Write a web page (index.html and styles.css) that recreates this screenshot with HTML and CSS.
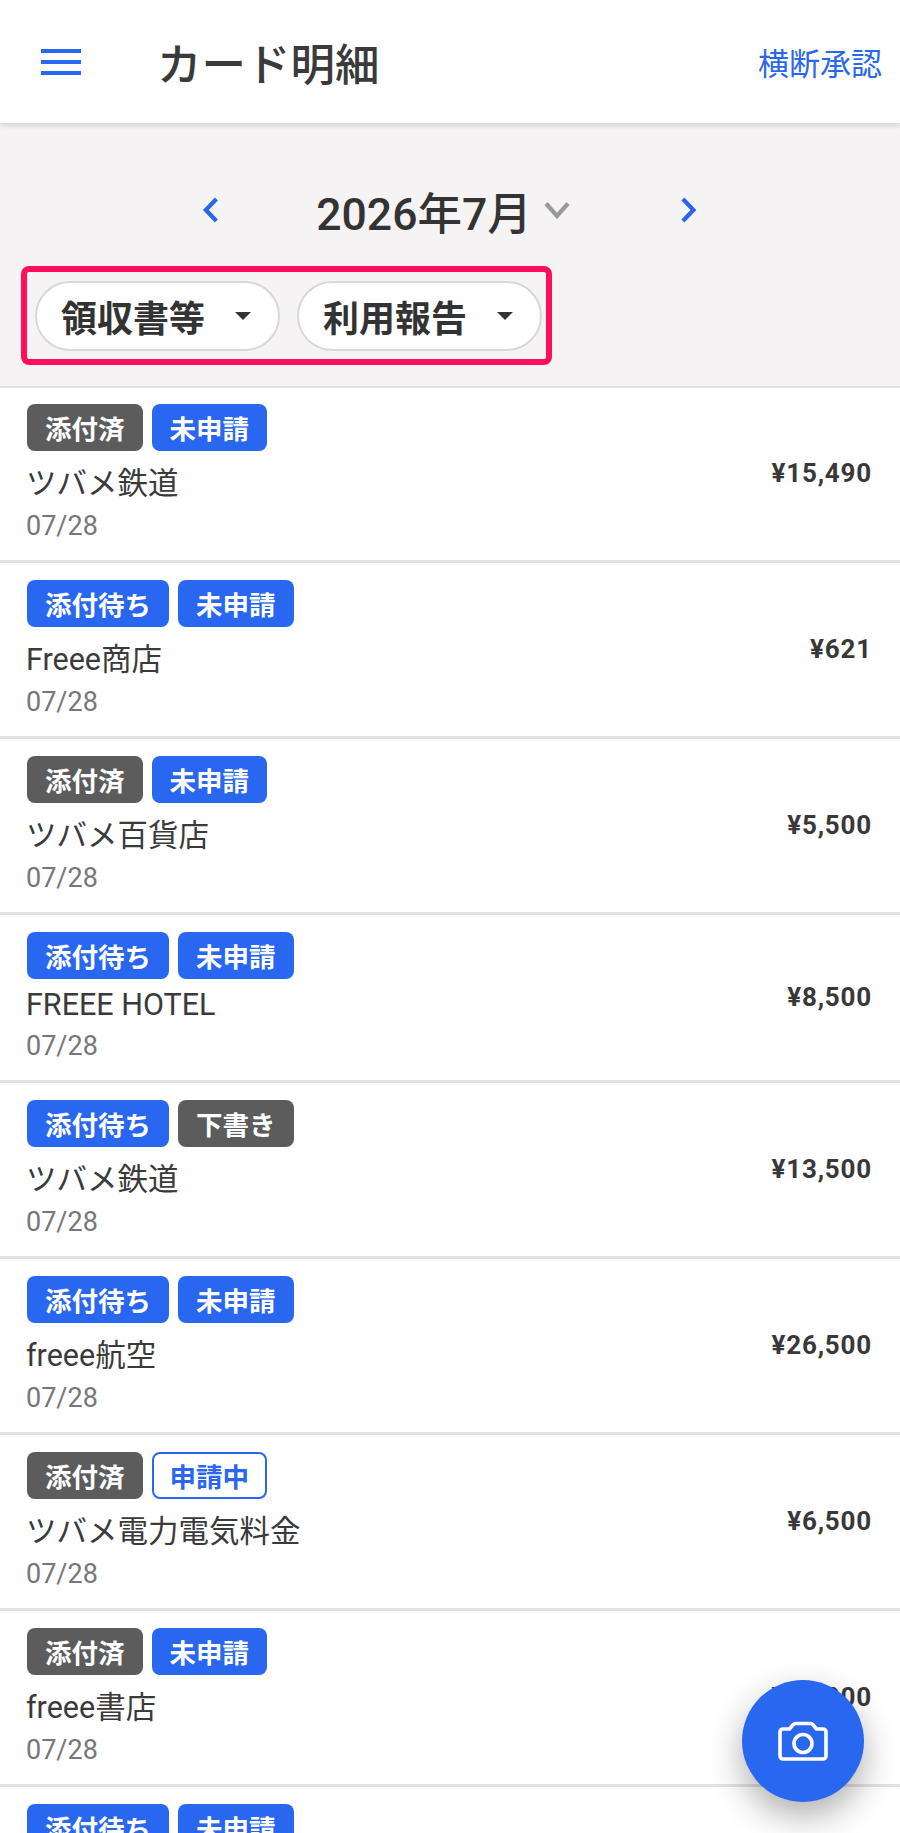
FILE: index.html
```html
<!DOCTYPE html>
<html lang="ja">
<head>
<meta charset="utf-8">
<title>カード明細</title>
<link rel="stylesheet" href="styles.css">
</head>
<body>
<div class="app">
  <header class="topbar">
    <svg class="menu-icon" width="40" height="26" viewBox="0 0 40 26"><path d="M0 2h40M0 13h40M0 24h40" stroke="#2a67f0" stroke-width="4" fill="none"/></svg>
    <h1 class="title">カード明細</h1>
    <a class="cross-link">横断承認</a>
  </header>
  <section class="controls">
    <div class="month-nav">
      <svg class="chev" width="18" height="28" viewBox="0 0 18 28"><path d="M15 2.500 4 14l11 11.500" stroke="#2a67f0" stroke-width="4.400" fill="none"/></svg>
      <div class="month">
        <span>2026年7月</span>
        <svg width="26" height="18" viewBox="0 0 26 18"><path d="M2 2.500 13 15 24 2.500" stroke="#9a9a9a" stroke-width="4.200" fill="none"/></svg>
      </div>
      <svg class="chev" width="18" height="28" viewBox="0 0 18 28"><path d="M3 2.500 14 14 3 25.500" stroke="#2a67f0" stroke-width="4.400" fill="none"/></svg>
    </div>
    <div class="filters">
      <button class="chip">領収書等<i class="caret"></i></button>
      <button class="chip">利用報告<i class="caret"></i></button>
    </div>
  </section>
  <ul class="list">
    <li class="row"><div class="info"><div class="tags"><span class="tag gray">添付済</span><span class="tag blue">未申請</span></div><div class="name">ツバメ鉄道</div><div class="date">07/28</div></div><div class="amount">¥15,490</div></li>
    <li class="row"><div class="info"><div class="tags"><span class="tag blue">添付待ち</span><span class="tag blue">未申請</span></div><div class="name">Freee商店</div><div class="date">07/28</div></div><div class="amount">¥621</div></li>
    <li class="row"><div class="info"><div class="tags"><span class="tag gray">添付済</span><span class="tag blue">未申請</span></div><div class="name">ツバメ百貨店</div><div class="date">07/28</div></div><div class="amount">¥5,500</div></li>
    <li class="row"><div class="info"><div class="tags"><span class="tag blue">添付待ち</span><span class="tag blue">未申請</span></div><div class="name">FREEE HOTEL</div><div class="date">07/28</div></div><div class="amount">¥8,500</div></li>
    <li class="row"><div class="info"><div class="tags"><span class="tag blue">添付待ち</span><span class="tag gray">下書き</span></div><div class="name">ツバメ鉄道</div><div class="date">07/28</div></div><div class="amount">¥13,500</div></li>
    <li class="row"><div class="info"><div class="tags"><span class="tag blue">添付待ち</span><span class="tag blue">未申請</span></div><div class="name">freee航空</div><div class="date">07/28</div></div><div class="amount">¥26,500</div></li>
    <li class="row"><div class="info"><div class="tags"><span class="tag gray">添付済</span><span class="tag outline">申請中</span></div><div class="name">ツバメ電力電気料金</div><div class="date">07/28</div></div><div class="amount">¥6,500</div></li>
    <li class="row"><div class="info"><div class="tags"><span class="tag gray">添付済</span><span class="tag blue">未申請</span></div><div class="name">freee書店</div><div class="date">07/28</div></div><div class="amount">¥18,000</div></li>
    <li class="row"><div class="info"><div class="tags"><span class="tag blue">添付待ち</span><span class="tag blue">未申請</span></div></div></li>
  </ul>
  <button class="fab" aria-label="カメラ">
    <svg width="50" height="40" viewBox="0 0 50 40"><path d="M5 8h6.500l3.600-4.400a3 3 0 0 1 2.300-1.100h15.200a3 3 0 0 1 2.300 1.100L38.500 8H45a3 3 0 0 1 3 3v24a3 3 0 0 1-3 3H5a3 3 0 0 1-3-3V11a3 3 0 0 1 3-3z" stroke="#fff" stroke-width="3.600" fill="none" stroke-linejoin="round"/><circle cx="25" cy="22.500" r="9" stroke="#fff" stroke-width="3.600" fill="none"/></svg>
  </button>
</div>
</body>
</html>
```
FILE: styles.css
```css
* { box-sizing: border-box; }
html, body { margin: 0; padding: 0; }
body {
  font-family: Roboto, "Noto Sans CJK JP", sans-serif;
  color: #333;
  background: #fff;
}
.app {
  position: relative;
  width: 900px;
  height: 1833px;
  overflow: hidden;
}
.topbar {
  position: relative;
  z-index: 1;
  display: flex;
  align-items: center;
  height: 123px;
  padding: 0 18px 0 41px;
  background: #fff;
  box-shadow: 0 2px 6px rgba(0, 0, 0, 0.16);
}
.title {
  margin: 0 0 0 76px;
  font-size: 44.500px;
  font-weight: 500;
  color: #3a3a3a;
}
.cross-link {
  margin-left: auto;
  font-size: 31px;
  color: #2a67f0;
}
.controls {
  height: 263px;
  padding: 57px 0 0 21px;
  background: #f5f3f4;
}
.month-nav {
  display: flex;
  align-items: center;
  width: 676px;
  padding-left: 181px;
  height: 60px;
}
.month {
  display: flex;
  align-items: center;
  gap: 12px;
  margin-left: 97px;
  margin-right: 110px;
  font-size: 44.500px;
  font-weight: 500;
  color: #333;
  white-space: nowrap;
}
.filters {
  display: inline-flex;
  gap: 17px;
  margin-top: 26px;
  padding: 9px 4px 8px 8px;
  border: 6px solid #ff0f5b;
  border-radius: 8px;
}
.chip {
  display: flex;
  align-items: center;
  width: 245px;
  height: 70px;
  padding: 0 0 0 24px;
  background: #fff;
  border: 2px solid #d8d8d8;
  border-radius: 35px;
  font-family: inherit;
  font-size: 36px;
  font-weight: 700;
  color: #333;
}
.caret {
  width: 0;
  height: 0;
  margin-left: 30px;
  border-left: 8px solid transparent;
  border-right: 8px solid transparent;
  border-top: 8px solid #333;
}
.list { margin: 0; padding: 0; list-style: none; background: #fff; }
.row {
  display: flex;
  align-items: center;
  justify-content: space-between;
  padding: 17px 28px 18px 27px;
  border-top: 3px solid #e2e2e2;
}
.row:first-child {
  padding-top: 16px;
  padding-bottom: 17.500px;
  border-top-width: 2px;
}
.tags { display: flex; gap: 9px; margin-bottom: 8px; }
.tag {
  display: flex;
  align-items: center;
  height: 47px;
  padding: 0 18px;
  border-radius: 8px;
  font-size: 26.500px;
  font-weight: 700;
  color: #fff;
}
.tag.gray { background: #5c5c5c; }
.tag.blue { background: #2a67f0; }
.tag.outline {
  padding: 0 16px;
  background: #fff;
  border: 2px solid #2a67f0;
  color: #2a67f0;
}
.name { min-height: 36px; margin-left: -1px; font-size: 30.500px; color: #3a3a3a; }
.date { margin-top: 7px; margin-left: -1px; font-size: 27px; color: #777; }
.amount {
  font-size: 26px;
  font-weight: 700;
  letter-spacing: 0.800px;
  color: #383838;
}
.fab {
  position: absolute;
  left: 742px;
  top: 1680px;
  display: flex;
  align-items: center;
  justify-content: center;
  width: 122px;
  height: 122px;
  padding: 0;
  border: 0;
  border-radius: 50%;
  background: #2a67f0;
  box-shadow: 0 14px 34px rgba(0, 0, 0, 0.32);
}
```
